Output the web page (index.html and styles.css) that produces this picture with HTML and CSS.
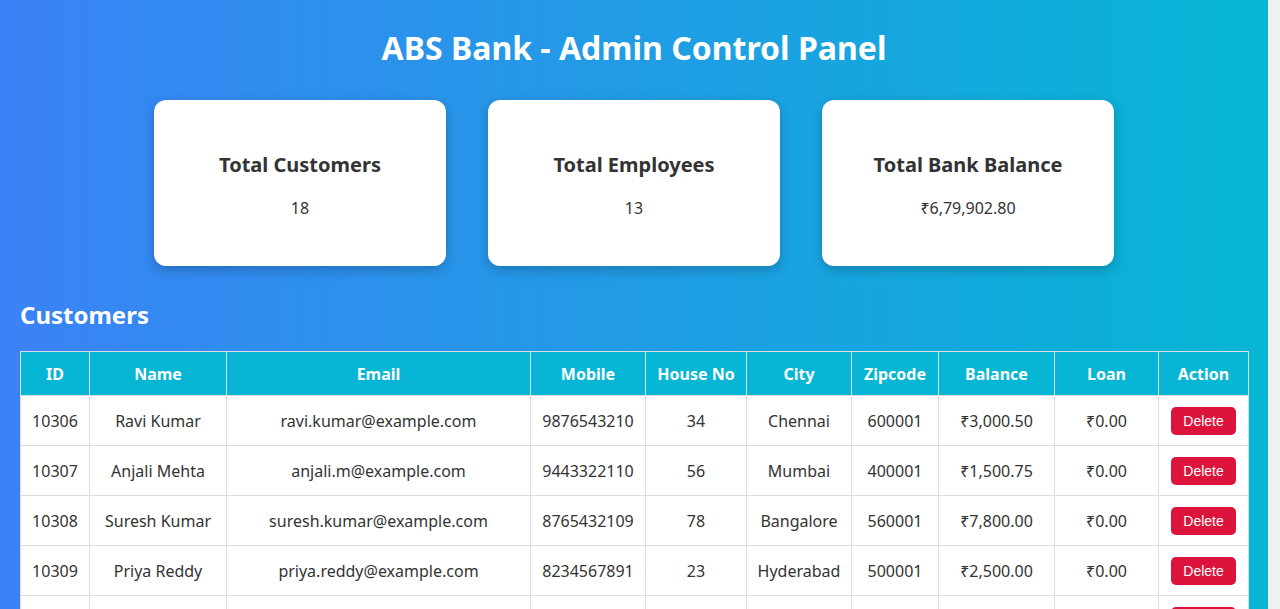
FILE: index.html
```html
<!DOCTYPE html>
<html lang="en">
<head>
<meta charset="UTF-8">
<title>ABS Bank - Admin Control Panel</title>
<link rel="stylesheet" href="styles.css">
</head>
<body>
<div class="page">
  <h1 class="title">ABS Bank - Admin Control Panel</h1>

  <div class="stats">
    <div class="card">
      <h3 class="card-title">Total Customers</h3>
      <p class="card-value">18</p>
    </div>
    <div class="card">
      <h3 class="card-title">Total Employees</h3>
      <p class="card-value">13</p>
    </div>
    <div class="card">
      <h3 class="card-title">Total Bank Balance</h3>
      <p class="card-value">₹6,79,902.80</p>
    </div>
  </div>

  <h2 class="section-title">Customers</h2>

  <table class="data-table">
    <colgroup>
      <col class="c-id"><col class="c-name"><col class="c-email"><col class="c-mobile"><col class="c-house">
      <col class="c-city"><col class="c-zip"><col class="c-bal"><col class="c-loan"><col class="c-act">
    </colgroup>
    <thead>
      <tr>
        <th>ID</th><th>Name</th><th>Email</th><th>Mobile</th><th>House No</th>
        <th>City</th><th>Zipcode</th><th>Balance</th><th>Loan</th><th>Action</th>
      </tr>
    </thead>
    <tbody>
      <tr>
        <td>10306</td><td>Ravi Kumar</td><td>ravi.kumar@example.com</td><td>9876543210</td><td>34</td>
        <td>Chennai</td><td>600001</td><td>₹3,000.50</td><td>₹0.00</td><td><button class="btn-delete">Delete</button></td>
      </tr>
      <tr>
        <td>10307</td><td>Anjali Mehta</td><td>anjali.m@example.com</td><td>9443322110</td><td>56</td>
        <td>Mumbai</td><td>400001</td><td>₹1,500.75</td><td>₹0.00</td><td><button class="btn-delete">Delete</button></td>
      </tr>
      <tr>
        <td>10308</td><td>Suresh Kumar</td><td>suresh.kumar@example.com</td><td>8765432109</td><td>78</td>
        <td>Bangalore</td><td>560001</td><td>₹7,800.00</td><td>₹0.00</td><td><button class="btn-delete">Delete</button></td>
      </tr>
      <tr>
        <td>10309</td><td>Priya Reddy</td><td>priya.reddy@example.com</td><td>8234567891</td><td>23</td>
        <td>Hyderabad</td><td>500001</td><td>₹2,500.00</td><td>₹0.00</td><td><button class="btn-delete">Delete</button></td>
      </tr>
      <tr>
        <td>10310</td><td>Karthik Rao</td><td>karthik.rao@example.com</td><td>9123456780</td><td>12</td>
        <td>Pune</td><td>411001</td><td>₹4,200.00</td><td>₹0.00</td><td><button class="btn-delete">Delete</button></td>
      </tr>
      <tr>
        <td>10311</td><td>Meena Iyer</td><td>meena.iyer@example.com</td><td>9988776655</td><td>45</td>
        <td>Kochi</td><td>682001</td><td>₹5,600.25</td><td>₹0.00</td><td><button class="btn-delete">Delete</button></td>
      </tr>
    </tbody>
  </table>
</div>
</body>
</html>
```

FILE: styles.css
```css
html {
  margin: 0;
  padding: 0;
  background: #f0f0f0;
}

body {
  margin: 0 12px 0 0;
  padding: 0;
  font-family: "Noto Sans", "Open Sans", sans-serif;
  color: #333;
  background: linear-gradient(to right, #3b82f6, #06b6d4);
  min-height: 100vh;
}

.page {
  padding: 20px;
}

.title {
  margin: 8px 0 32px;
  font-size: 32px;
  line-height: 40px;
  font-weight: 700;
  color: #fff;
  text-align: center;
}

.stats {
  display: flex;
  justify-content: center;
  gap: 42px;
}

.card {
  width: 292px;
  box-sizing: border-box;
  background: #fff;
  border-radius: 12px;
  box-shadow: 0 4px 12px rgba(0, 0, 0, 0.22);
  padding: 30px 20px;
  text-align: center;
}

.card-title {
  margin: 21px 0 18px;
  font-size: 20px;
  line-height: 28px;
  font-weight: 700;
}

.card-value {
  margin: 0 0 17px;
  font-size: 16px;
  line-height: 22px;
}

.section-title {
  margin: 33px 0 20px;
  font-size: 24px;
  line-height: 32px;
  font-weight: 700;
  color: #fff;
}

.data-table {
  width: 100%;
  table-layout: fixed;
  border-collapse: collapse;
  background: #fff;
}

.c-id { width: 69px; }
.c-name { width: 137px; }
.c-email { width: 304px; }
.c-mobile { width: 115px; }
.c-house { width: 101px; }
.c-city { width: 105px; }
.c-zip { width: 87px; }
.c-bal { width: 116px; }
.c-loan { width: 104px; }
.c-act { width: 90px; }

.data-table th,
.data-table td {
  border: 1px solid #ddd;
  text-align: center;
  white-space: nowrap;
  padding: 0 6px;
}

.data-table th {
  height: 43px;
  background: #06b6d4;
  color: #fff;
  font-size: 16px;
  font-weight: 700;
}

.data-table td {
  height: 49px;
  font-size: 16px;
  color: #333;
}

.btn-delete {
  height: 28px;
  padding: 0 12px;
  border: none;
  border-radius: 5px;
  background: #dc143c;
  color: #fff;
  font-family: "Liberation Sans", Arial, sans-serif;
  font-size: 14px;
  cursor: pointer;
}
```
